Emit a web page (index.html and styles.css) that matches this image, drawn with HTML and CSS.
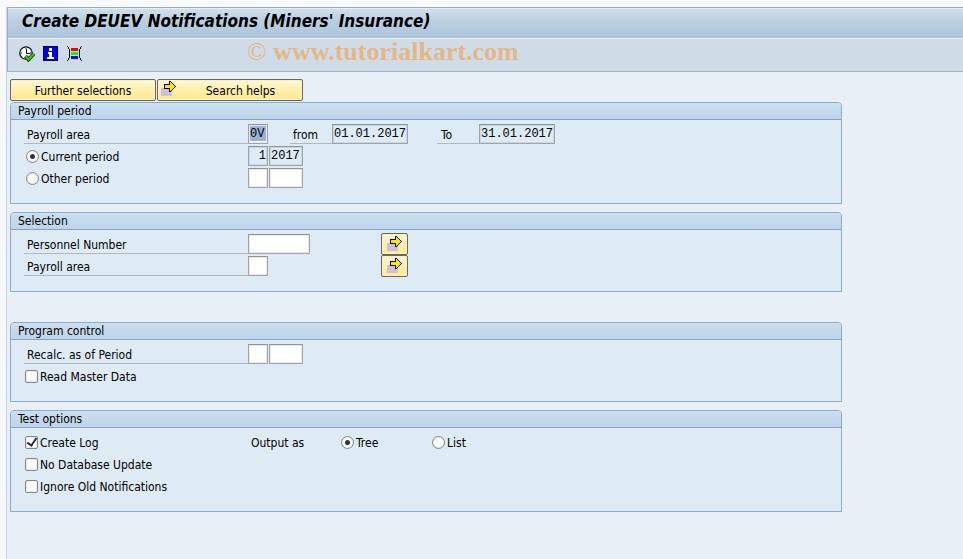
FILE: index.html
```html
<!DOCTYPE html>
<html lang="en">
<head>
<meta charset="utf-8">
<title>Create DEUEV Notifications (Miners' Insurance)</title>
<link rel="stylesheet" href="styles.css">
</head>
<body>
<svg class="defs" aria-hidden="true">
  <symbol id="arrow" viewBox="0 0 15 15">
    <path fill="#d0bedd" d="M0 7h11v8H0z"/>
    <path fill="#000" d="M3 3h5V0h2v1h1v1h1v1h1v1h1v1h1v1h-1v1h-1v1h-1v1h-1v1h-1v1H8V8H3z"/>
    <path fill="#ffe600" d="M4 4h5V1h1v1h1v1h1v1h1v1h1v1h-1v1h-1v1h-1v1h-1v1H9V7H4z"/>
  </symbol>
</svg>
<div class="window">
  <header class="head">
    <h1 class="title">Create DEUEV Notifications (Miners' Insurance)</h1>
    <div class="toolbar">
      <button class="tool" type="button" aria-label="Execute">
        <svg viewBox="0 0 16 16">
          <circle cx="7" cy="7" r="6.2" fill="#fff" stroke="#111" stroke-width="1.3"/>
          <path d="M7 2v1M2 7h1M11 7h1M7 11v1M7.5 3v4.500H11" fill="none" stroke="#111"/>
          <path d="M6.500 10l3 3.500L15 7.500" fill="none" stroke="#174a0c" stroke-width="4"/>
          <path d="M6.500 10l3 3.500L15 7.500" fill="none" stroke="#55b02c" stroke-width="2"/>
        </svg>
      </button>
      <button class="tool" type="button" aria-label="Information">
        <svg viewBox="0 0 16 16" shape-rendering="crispEdges">
          <path fill="#000050" d="M0 0h15v15H0z"/>
          <path fill="#0000f0" d="M1 1h13v13H1z"/>
          <path fill="#fff" d="M6 2h3v3H6zM5 6h4v5h2v2H4v-2h2V8H5z"/>
        </svg>
      </button>
      <button class="tool" type="button" aria-label="Dynamic selections">
        <svg viewBox="0 0 16 16" shape-rendering="crispEdges">
          <path fill="#f00" d="M4 2h7v3H4z"/>
          <path fill="#0f0" d="M4 6h7v3H4z"/>
          <path fill="#00f" d="M4 10h7v3H4z"/>
          <path fill="#111" d="M0 0h1v1H0zM1 1h1v2H1zM2 3h1v9H2zM1 12h1v2H1zM0 14h1v1H0zM14 0h1v1h-1zM13 1h1v2h-1zM12 3h1v9h-1zM13 12h1v2h-1zM14 14h1v1h-1z"/>
        </svg>
      </button>
      <span class="mark"><span class="copy">©</span> www.tutorialkart.com</span>
    </div>
  </header>

  <main class="content">
    <div class="actions">
      <button class="btn wide" type="button">Further selections</button>
      <button class="btn wide" type="button"><svg class="arrow"><use href="#arrow"/></svg><span class="grow">Search helps</span></button>
    </div>

    <section class="group">
      <h2>Payroll period</h2>
      <div class="rows">
        <div class="row">
          <label class="name" for="area">Payroll area</label>
          <input class="field w2 selected" id="area" value="0V" readonly>
          <label class="name short gap-s" for="from">from</label>
          <input class="field w10" id="from" value="01.01.2017" readonly>
          <label class="name short gap-m" for="to">To</label>
          <input class="field w10" id="to" value="31.01.2017" readonly>
        </div>
        <div class="row">
          <label class="choice first"><input type="radio" name="period" checked><span>Current period</span></label>
          <input class="field w2 right" value="1" aria-label="Current period number" readonly>
          <input class="field w4" value="2017" aria-label="Current period year" readonly>
        </div>
        <div class="row">
          <label class="choice first"><input type="radio" name="period"><span>Other period</span></label>
          <input class="field w2" aria-label="Other period number">
          <input class="field w4" aria-label="Other period year">
        </div>
      </div>
    </section>

    <section class="group">
      <h2>Selection</h2>
      <div class="rows">
        <div class="row lookup">
          <label class="name" for="pernr">Personnel Number</label>
          <span><input class="field w8" id="pernr"></span>
          <button class="btn more" type="button" aria-label="Multiple selection, personnel number"><svg class="arrow"><use href="#arrow"/></svg></button>
        </div>
        <div class="row lookup">
          <label class="name" for="abkrs">Payroll area</label>
          <span><input class="field w2" id="abkrs"></span>
          <button class="btn more" type="button" aria-label="Multiple selection, payroll area"><svg class="arrow"><use href="#arrow"/></svg></button>
        </div>
      </div>
    </section>

    <section class="group apart">
      <h2>Program control</h2>
      <div class="rows">
        <div class="row">
          <label class="name" for="recalc">Recalc. as of Period</label>
          <input class="field w2" id="recalc">
          <input class="field w4" aria-label="Recalculation year">
        </div>
        <div class="row">
          <label class="choice"><input type="checkbox"><span>Read Master Data</span></label>
        </div>
      </div>
    </section>

    <section class="group">
      <h2>Test options</h2>
      <div class="rows">
        <div class="row output">
          <label class="choice"><input type="checkbox" checked><span>Create Log</span></label>
          <span class="caption">Output as</span>
          <label class="choice"><input type="radio" name="output" checked><span>Tree</span></label>
          <label class="choice"><input type="radio" name="output"><span>List</span></label>
        </div>
        <div class="row">
          <label class="choice"><input type="checkbox"><span>No Database Update</span></label>
        </div>
        <div class="row">
          <label class="choice"><input type="checkbox"><span>Ignore Old Notifications</span></label>
        </div>
      </div>
    </section>
  </main>
</div>
</body>
</html>
```
FILE: styles.css
```css
* { box-sizing: border-box; }

body {
  margin: 0;
  padding: 7px 0 0 6px;
  background: #f8f9fd;
  color: #000;
  font: 12px/20px "DejaVu Sans Condensed", "DejaVu Sans", sans-serif;
}

h1, h2 { margin: 0; }

.defs { display: none; }

.window {
  min-height: calc(100vh - 7px);
  border-left: 1px solid #ccd8e6;
  background: #e8eff7;
}

.head {
  border-top: 1px solid #9aabc2;
  border-left: 1px solid #9aabc2;
  border-bottom: 1px solid #a0b3c8;
  background: #cfdce7;
}

.title {
  height: 31px;
  padding-left: 14px;
  border-top: 1px solid #e6eef6;
  border-bottom: 1px solid #edf3f8;
  background: linear-gradient(#d0dfed, #bccfe0 40%, #abc4dc);
  font-size: 17px;
  line-height: 24px;
  font-style: italic;
}

.toolbar {
  display: flex;
  align-items: center;
  gap: 8px;
  height: 32px;
  padding: 0 0 2px 11px;
}

.tool {
  width: 16px;
  height: 16px;
  padding: 0;
  border: 0;
  background: none;
}

.tool svg { display: block; width: 16px; height: 16px; }

.mark {
  margin: -4px 0 0 156px;
  color: #e4b787;
  font: bold 26px/28px "Liberation Serif", serif;
}

.copy { font-weight: normal; }

.content { padding: 7px 3px; }

.actions { display: flex; gap: 1px; }

.btn {
  display: flex;
  align-items: center;
  justify-content: center;
  height: 22px;
  padding: 1px 3px 0;
  border: 1px solid #66676b;
  border-radius: 2px;
  background: linear-gradient(#fff8d8, #ffefa8 55%, #ffe993);
  box-shadow: inset 0 0 0 1px #fff2bd;
  color: #000;
  font: inherit;
}

.wide { width: 146px; }
.more { width: 27px; padding: 0 3px 2px; }
.grow { flex: 1; padding-left: 6px; }
.arrow { width: 15px; height: 15px; shape-rendering: crispEdges; }
.wide .arrow { margin-bottom: 4px; }

.group {
  max-width: 832px;
  margin-bottom: 8px;
  padding-bottom: 14px;
  border: 1px solid #8caccc;
  border-radius: 4px 4px 0 0;
  background: #deeaf4;
}

.actions + .group { margin-top: 1px; }
.apart { margin-top: 30px; }

.group h2 {
  height: 17px;
  padding-left: 7px;
  border-bottom: 1px solid #85a3c8;
  border-radius: 3px 3px 0 0;
  background: linear-gradient(#cddff0, #bdd4ea);
  font-size: 12px;
  line-height: 16px;
  font-weight: normal;
}

.rows { padding: 3px 13px 0; }

.row {
  display: flex;
  align-items: center;
  gap: 1px;
  height: 22px;
}

.name {
  width: 224px;
  height: 20px;
  margin-right: -1px;
  padding-left: 3px;
  border-bottom: 1px solid #b4b6b9;
  line-height: 22px;
}

.short { width: 42px; }
.gap-s { margin-left: 21px; }
.gap-m { margin-left: 28px; padding-left: 4px; }

.field {
  display: block;
  height: 20px;
  padding: 0 1px;
  border: 1px solid #a0a3a8;
  border-top-color: #8f9297;
  background: #fff;
  box-shadow: inset 0 0 0 1px #e6e8ec;
  color: #000;
  font: 12px/16px "Liberation Mono", monospace;
}

.field[readonly] {
  background: #deeaf4;
  box-shadow: inset 0 0 0 1px #ccd6e0;
}

.field.selected {
  background: #9ab3d3;
  box-shadow: inset 0 0 0 1px #e2e9f2, inset 0 -2px #fff;
}

.right { text-align: right; }
.w2 { width: 20px; }
.w4 { width: 34px; }
.w8 { width: 62px; }
.w10 { width: 76px; }

.choice {
  display: flex;
  align-items: center;
  gap: 2px;
  padding-left: 1px;
}

.choice span, .caption { line-height: 20px; padding-top: 2px; }

.first { width: 223px; padding-left: 2px; }

input[type="radio"], input[type="checkbox"] {
  display: grid;
  place-items: center;
  appearance: none;
  width: 13px;
  height: 13px;
  margin: 0;
  border: 1px solid #85888d;
  border-radius: 2px;
  background: #fff;
  box-shadow: inset 0 0 0 1px #e8eaed;
}

input[type="radio"] { border-radius: 50%; }

input[type="radio"]:checked::before {
  content: "";
  width: 5px;
  height: 5px;
  border-radius: 50%;
  background: #30303f;
}

input[type="checkbox"]:checked::before {
  content: "";
  width: 4px;
  height: 8px;
  border: solid #2c2c3c;
  border-width: 0 2px 2px 0;
  transform: translateY(-1px) rotate(35deg);
}

.lookup {
  display: grid;
  grid-template-columns: 223px 132px auto;
  justify-content: start;
}

.output {
  display: grid;
  grid-template-columns: 226px 88px 90px auto;
  justify-content: start;
}
```
